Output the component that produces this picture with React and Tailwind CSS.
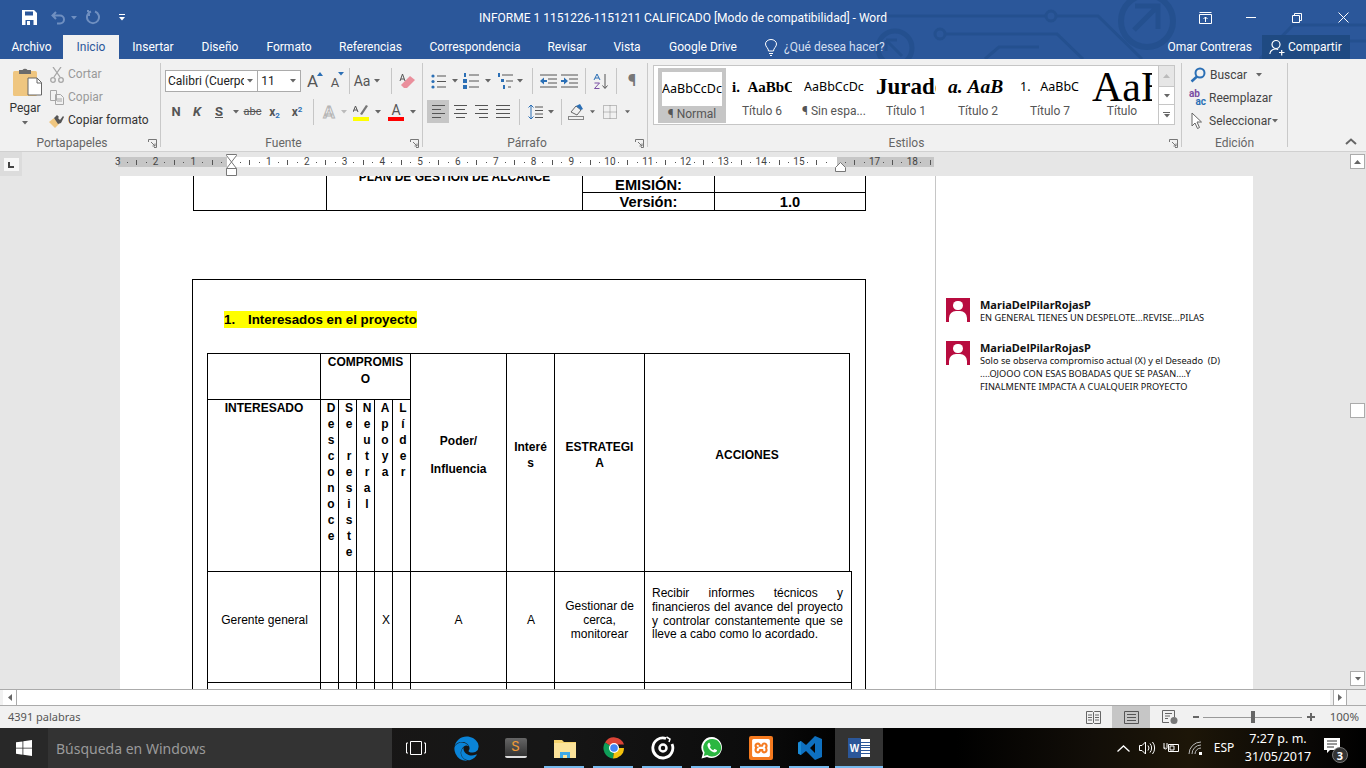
import React from "react";
import { FaEdge } from "react-icons/fa";
import { SiXampp } from "react-icons/si";

const Caret = ({ c = "#666" }) => (
  <svg width="6" height="4" viewBox="0 0 6 4"><path d="M0 0h6L3 3.5z" fill={c} /></svg>
);
const C = ({ w, children, cls = "" }) => (
  <div className={`flex items-center justify-center shrink-0 h-full ${w} ${cls}`}>{children}</div>
);
const Sep = () => <div className="w-px h-[26px] bg-[#c6c6c6] shrink-0 self-center" />;
const Launcher = () => (
  <svg width="9" height="9" viewBox="0 0 9 9" fill="none" stroke="#777"><path d="M.5 3V.5h8v8H6M3 3l4 4M7 4.5V7H4.5" /></svg>
);
const Group = ({ w, label, children }) => (
  <div className={`relative h-[84px] border-r border-[#c9c9c9] shrink-0 ${w}`}>
    <div className="h-[73px] flow-root">{children}</div>
    <div className={`h-[14px] leading-[14px] text-center text-[12px] text-[#666] ${label === "Edición" ? "" : "pr-[16px]"}`}>{label}</div>
    <div className="absolute right-[3px] bottom-[-1px]">{label !== "Edición" && <Launcher />}</div>
  </div>
);

const Lines = ({ rows, stroke = "#555" }) => (
  <svg width="17" height="15" viewBox="0 0 17 15" stroke={stroke} fill="none">
    {rows.map(([a, b], i) => <path key={i} d={`M${a} ${1.5 + i * 4}H${b}`} />)}
  </svg>
);
const Bullets = () => (
  <svg width="16" height="15" viewBox="0 0 16 15"><g fill="#2b6fb5"><circle cx="2" cy="2" r="1.6" /><circle cx="2" cy="7.5" r="1.6" /><circle cx="2" cy="13" r="1.6" /></g><path d="M6 2h9M6 7.5h9M6 13h9" stroke="#555" /></svg>
);
const Numbers = () => (
  <svg width="16" height="16" viewBox="0 0 16 16"><g fill="#2b6fb5"><rect x="1" y="0" width="2" height="4" /><rect x="0" y="6" width="4" height="4" /><rect x="0" y="12" width="4" height="4" /></g><path d="M6 2h10M6 8h10M6 14h10" stroke="#555" /></svg>
);
const Multi = () => (
  <svg width="16" height="16" viewBox="0 0 16 16"><g fill="#2b6fb5"><rect x="0" y="0" width="2" height="4" /><rect x="3" y="6" width="3" height="3" /><rect x="5" y="12" width="2" height="4" /></g><path d="M4 2h11M8 8h7M10 14h3" stroke="#555" /></svg>
);
const Indent = ({ dir }) => (
  <svg width="17" height="14" viewBox="0 0 17 14"><path d="M0 1h17M8 5h9M8 9h9M0 13h17" stroke="#555" /><path d={dir < 0 ? "M0 7l4-3.5V6h3v2H4v2.5z" : "M7 7L3 3.5V6H0v2h3v2.5z"} fill="#2b6fb5" /></svg>
);

function Ribbon() {
  return (
    <div className="relative flex h-[93px] bg-[#f1f1f1] border-b border-[#d0d0d0] pt-[4px] shrink-0">
      <Group w="w-[161px]" label="Portapapeles">
        <div className="flex">
          <div className="w-[50px] flex flex-col items-center">
            <svg className="mt-[3px] ml-[5px]" width="30" height="31" viewBox="0 0 30 31">
              <rect x="0" y="5" width="24" height="25" rx="1.5" fill="#efc680" />
              <path d="M6 4h3.5a3 3 0 0 1 5 0H18v4H6z" fill="#6b6b6b" />
              <path d="M15 12h9l4.500 4.500V29H15z" fill="#fff" stroke="#666" />
              <path d="M24 12v5h4.500" fill="none" stroke="#666" />
            </svg>
            <div className="text-[12px] leading-[16px] text-[#333] mt-[3px]">Pegar</div>
            <div className="mt-[5px]"><Caret /></div>
          </div>
          <div className="flex flex-col text-[12px] leading-[23px]">
            <div className="flex items-center h-[23px] text-[#999]">
              <svg className="mr-[4px]" width="14" height="16" viewBox="0 0 14 16" fill="none" stroke="#a6a6a6" strokeWidth="1.300"><path d="M3 0l7 10M11 0L4 10" /><circle cx="3" cy="13" r="2.300" /><circle cx="11" cy="13" r="2.300" /></svg>
              Cortar
            </div>
            <div className="flex items-center h-[23px] text-[#999]">
              <svg className="mr-[4px]" width="14" height="15" viewBox="0 0 14 15" fill="#f1f1f1" stroke="#a6a6a6"><path d="M.5.500h6v10h-6zM5.500 4.500h5l3 3v7h-8z" /><path d="M7 9h5M7 11h5" /></svg>
              Copiar
            </div>
            <div className="flex items-center h-[23px] text-[#333] ml-[-1px]">
              <svg className="mr-[3px]" width="16" height="15" viewBox="0 0 16 15"><path d="M0 9l5-4 5 6-4 4z" fill="#efc680" /><path d="M5 5l3-3 2 2-1 1 2 2 3-4 1 1-3 6-3 1z" fill="#555" /></svg>
              Copiar formato
            </div>
          </div>
        </div>
      </Group>

      <Group w="w-[262px]" label="Fuente">
        <div className="flex h-[22px] mt-[7px] ml-[4px] text-[#444]">
          <div className="w-[94px] h-full bg-white border border-[#ababab] flex items-center pl-[2px] text-[12px] text-[#222]">
            <span className="w-[76px] overflow-hidden whitespace-nowrap">Calibri (Cuerpo</span><span className="ml-[3px]"><Caret /></span>
          </div>
          <div className="w-[43px] h-full bg-white border border-l-0 border-[#ababab] flex items-center justify-between pl-[3px] pr-[4px] text-[12px] text-[#222]">11<Caret /></div>
          <C w="w-[23px]"><span className="relative text-[17px] leading-none text-[#555]">A<span className="absolute top-[-1px] right-[-5px]"><svg width="6" height="4" viewBox="0 0 6 4"><path d="M0 4h6L3 0z" fill="#2b6fb5" /></svg></span></span></C>
          <C w="w-[22px]"><span className="relative text-[13px] leading-none text-[#555] mt-[3px]">A<span className="absolute top-[-4px] right-[-5px]"><Caret c="#2b6fb5" /></span></span></C>
          <C w="w-[3px]" />
          <Sep />
          <C w="w-[34px]"><span className="text-[14px] text-[#555] mr-[4px]">Aa</span><Caret /></C>
          <C w="w-[7px]" />
          <Sep />
          <C w="w-[30px]">
            <svg width="17" height="16" viewBox="0 0 17 16"><path d="M5 15l-3-3 9-9 5 4-8 8z" fill="#ea8f9c" /><path d="M1 8L3.500 1 6 8M2 6h3" stroke="#555" fill="none" /></svg>
          </C>
        </div>
        <div className="flex h-[22px] mt-[9px] ml-[4px] font-bold text-[#555]">
          <C w="w-[22px]" cls="text-[13px]">N</C>
          <C w="w-[20px]" cls="text-[13px] italic">K</C>
          <C w="w-[24px]" cls="text-[13px] underline">S</C>
          <C w="w-[10px]"><Caret /></C>
          <C w="w-[23px]" cls="text-[11px] font-normal line-through">abc</C>
          <C w="w-[21px]" cls="text-[12px]"><span>x<sub className="text-[8px] text-[#2b6fb5] bottom-[-2px]">2</sub></span></C>
          <C w="w-[24px]" cls="text-[12px]"><span>x<sup className="text-[8px] text-[#2b6fb5] top-[-4px]">2</sup></span></C>
          <C w="w-[4px]" />
          <Sep />
          <C w="w-[3px]" />
          <C w="w-[24px]"><span className="text-[17px] leading-none text-[#f1f1f1] [-webkit-text-stroke:1px_#b5b5b5]">A</span></C>
          <C w="w-[6px]"><Caret c="#bbb" /></C>
          <C w="w-[27px]">
            <div className="flex flex-col items-center w-[16px]">
              <svg width="16" height="13" viewBox="0 0 16 13"><path d="M9 11l6-9-2-1-6 9z" fill="#777" /><path d="M0 8l2.500-6L5 8M1 6h3" stroke="#555" fill="none" /></svg>
              <div className="w-[16px] h-[4px] bg-[#ffff00]" />
            </div>
          </C>
          <C w="w-[8px]"><Caret /></C>
          <C w="w-[28px]">
            <div className="flex flex-col items-center w-[16px] text-[14px] leading-[13px] font-normal text-[#555]">
              A
              <div className="w-[16px] h-[4px] bg-[#ff0000]" />
            </div>
          </C>
          <C w="w-[6px]"><Caret /></C>
        </div>
      </Group>

      <Group w="w-[225px]" label="Párrafo">
        <div className="flex h-[22px] mt-[7px] ml-[8px]">
          <C w="w-[16px]"><Bullets /></C>
          <C w="w-[16px]"><Caret /></C>
          <C w="w-[16px]"><Numbers /></C>
          <C w="w-[17px]"><Caret /></C>
          <C w="w-[20px]"><Multi /></C>
          <C w="w-[8px]"><Caret /></C>
          <C w="w-[8px]" />
          <Sep />
          <C w="w-[4px]" />
          <C w="w-[22px]"><Indent dir={-1} /></C>
          <C w="w-[20px]"><Indent dir={1} /></C>
          <C w="w-[6px]" />
          <Sep />
          <C w="w-[30px]">
            <svg width="16" height="17" viewBox="0 0 16 17"><path d="M12 1v14M9.500 12.500L12 15.500l2.500-3" stroke="#555" fill="none" /><path d="M1 7l3-6 3 6M2 5h4" stroke="#2b6fb5" fill="none" /><path d="M1.500 10h5L1.500 15.500h5" stroke="#7a4fa3" fill="none" /></svg>
          </C>
          <Sep />
          <C w="w-[30px]" cls="text-[17px] font-bold text-[#777]">¶</C>
        </div>
        <div className="flex h-[23px] mt-[8px] ml-[4px]">
          <C w="w-[22px]" cls="bg-[#c6c6c6]"><Lines rows={[[2, 15], [2, 11], [2, 15], [2, 11]]} /></C>
          <C w="w-[22px]"><Lines rows={[[2, 15], [4, 13], [2, 15], [4, 13]]} /></C>
          <C w="w-[21px]"><Lines rows={[[2, 15], [6, 15], [2, 15], [6, 15]]} /></C>
          <C w="w-[23px]"><Lines rows={[[1, 15], [1, 15], [1, 15], [1, 15]]} /></C>
          <C w="w-[4px]" />
          <Sep />
          <C w="w-[2px]" />
          <C w="w-[26px]">
            <svg width="15" height="16" viewBox="0 0 15 16"><path d="M3 1v14M.5 3.500L3 1l2.500 2.500M.5 12.500L3 15l2.500-2.500" stroke="#2b6fb5" fill="none" /><path d="M7 3h8M7 6.500h8M7 10h8M7 13.500h8" stroke="#555" /></svg>
          </C>
          <C w="w-[6px]"><Caret /></C>
          <C w="w-[7px]" />
          <Sep />
          <C w="w-[28px]">
            <svg width="17" height="17" viewBox="0 0 17 17"><path d="M3 9l5-6 5 4-4 5z" fill="none" stroke="#666" /><path d="M8 3l5 4 2-1-3-5z" fill="#2b6fb5" /><rect x=".5" y="13.500" width="15" height="3" fill="#f1f1f1" stroke="#888" /></svg>
          </C>
          <C w="w-[5px]"><Caret /></C>
          <C w="w-[30px]">
            <svg width="14" height="14" viewBox="0 0 14 14" fill="none" stroke="#888" strokeDasharray="1 1"><path d="M.5.500h13v13H.5zM7 .500v13M.5 7h13" /></svg>
          </C>
          <C w="w-[5px]"><Caret /></C>
        </div>
      </Group>

      <Group w="w-[534px]" label="Estilos">
        <div className="flex w-[522px] h-[60px] mt-[2px] ml-[5px] bg-white border border-[#c6c6c6] overflow-hidden">
          <div className="flex w-[504px] shrink-0">
            <div className="w-[72px] pl-[4px] pt-[2px] shrink-0">
              <div className="w-[68px] h-[55px] bg-[#c6c6c6] p-[4px] pb-0 flex flex-col items-center">
                <div className="w-[60px] h-[34px] bg-white flex items-center justify-center overflow-hidden whitespace-nowrap text-[12.500px] text-black font-['Noto_Sans']">AaBbCcDc</div>
                <div className="text-[12px] leading-[16px] text-[#555]">¶ Normal</div>
              </div>
            </div>
            <StyleItem label="Título 6" cls="font-['Liberation_Serif'] font-bold text-[15px]">i.&nbsp;&nbsp;AaBbC</StyleItem>
            <StyleItem label="¶ Sin espa..." cls="font-['Noto_Sans'] text-[12.500px]">AaBbCcDc</StyleItem>
            <StyleItem label="Título 1" cls="font-['Liberation_Serif'] font-bold text-[23px]">Jurado</StyleItem>
            <StyleItem label="Título 2" cls="font-['Liberation_Serif'] font-bold italic text-[19.500px]">a.&nbsp;AaB</StyleItem>
            <StyleItem label="Título 7" cls="font-['Noto_Sans'] text-[12.500px]">1.&nbsp;&nbsp;&nbsp;AaBbC</StyleItem>
            <StyleItem label="Título" cls="font-['Liberation_Serif'] text-[42px]">AaB</StyleItem>
          </div>
          <div className="w-[16px] shrink-0 flex flex-col border-l border-[#c6c6c6]">
            <div className="h-[20px] bg-[#e6e6e6] flex items-center justify-center"><svg width="7" height="4" viewBox="0 0 7 4"><path d="M0 4h7L3.500 0z" fill="#bbb" /></svg></div>
            <div className="h-[19px] border-y border-[#c6c6c6] flex items-center justify-center"><Caret /></div>
            <div className="flex-1 flex flex-col items-center justify-center gap-[1px]"><div className="w-[7px] h-px bg-[#666]" /><Caret /></div>
          </div>
        </div>
      </Group>

      <Group w="w-[106px]" label="Edición">
        <div className="flex flex-col text-[12px] text-[#444] pl-[8px]">
          <div className="flex items-center h-[23px]">
            <svg width="16" height="16" viewBox="0 0 16 16" fill="none" className="mr-[4px]"><circle cx="10" cy="6" r="4.500" stroke="#2b6fb5" strokeWidth="2" /><path d="M7 9.500L1.500 14.500" stroke="#2b6fb5" strokeWidth="2.500" /></svg>
            Buscar<span className="ml-[9px]"><Caret /></span>
          </div>
          <div className="flex items-center h-[23px]">
            <span className="w-[17px] mr-[3px] text-[10px] leading-[8px] font-bold flex flex-col ml-[-1px]"><span className="text-[#7a4fa3]">ab</span><span className="text-[#2b6fb5] text-right">ac</span></span>
            Reemplazar
          </div>
          <div className="flex items-center h-[23px]">
            <svg width="12" height="18" viewBox="0 0 12 18" fill="#fff" stroke="#666" className="ml-[1px] mr-[6px]"><path d="M1 1v13l3-3 2.500 5.500 2-1L6 10h4.500z" /></svg>
            Seleccionar<span className="ml-[1px]"><Caret /></span>
          </div>
        </div>
      </Group>

      <div className="flex-1 flex items-end justify-end pr-[9px] pb-[6px]">
        <svg width="12" height="7" viewBox="0 0 12 7" fill="none" stroke="#666" strokeWidth="2"><path d="M1 6l5-4.500L11 6" /></svg>
      </div>
    </div>
  );
}

const StyleItem = ({ label, cls, children }) => (
  <div className="w-[72px] shrink-0 flex flex-col items-center pt-[2px]">
    <div className={`w-[60px] h-[34px] mt-[2px] overflow-hidden whitespace-nowrap text-black flex items-center justify-start ${cls}`}>
      <span className="shrink-0">{children}</span>
    </div>
    <div className="text-[12px] leading-[15px] text-[#555] whitespace-nowrap">{label}</div>
  </div>
);

const rulerNums = [3, 2, 1, "", 1, 2, 3, 4, 5, 6, 7, 8, 9, 10, 11, 12, 13, 14, 15, "", 17, 18];

function Ruler() {
  return (
    <div className="relative h-[24px] bg-[#e6e6e6] flex shrink-0">
      <div className="w-[22px] h-full bg-[#dcdcdc] flex items-start justify-center pt-[6px] shrink-0">
        <div className="w-[15px] h-[13px] bg-[#f7f7f7] flex items-center justify-center">
          <div className="w-[6px] h-[6px] border-l-2 border-b-2 border-[#444]" />
        </div>
      </div>
      <div className="relative ml-[96px] mt-[5px] flex h-[10px] w-[816px] text-[10px] text-[#444]">
        <div className="w-[109px] bg-[#c6c6c6]" />
        <div className="w-[610px] bg-white" />
        <div className="w-[97px] bg-[#c6c6c6]" />
        <div className="absolute left-[-5px] top-0 h-full w-[821px] overflow-hidden flex">
          {rulerNums.map((n, i) => (
            <div key={i} className="w-[37.800px] shrink-0 flex items-center">
              <div className="w-[9.450px] text-center leading-[10px] shrink-0">{n}</div>
              <div className="w-[9.450px] flex justify-center shrink-0"><div className="w-px h-px bg-[#555]" /></div>
              <div className="w-[9.450px] flex justify-center shrink-0"><div className="w-px h-[5px] bg-[#555]" /></div>
              <div className="w-[9.450px] flex justify-center shrink-0"><div className="w-px h-px bg-[#555]" /></div>
            </div>
          ))}
        </div>
      </div>
      <svg className="absolute left-[226px] top-[2px]" width="11" height="22" viewBox="0 0 11 22" fill="#fff" stroke="#777">
        <path d="M.5.500h10v1L5.500 8 .5 1.500z" />
        <path d="M5.500 8l5 6.500H.5z" />
        <path d="M.5 14.500h10v7H.5z" />
      </svg>
      <svg className="absolute left-[835px] top-[10px]" width="11" height="10" viewBox="0 0 11 10" fill="#fff" stroke="#777">
        <path d="M.5 5.500l5-5 5 5v4H.5z" />
      </svg>
    </div>
  );
}

const Cell = ({ cls = "", children }) => (
  <div className={`border-l border-t border-black text-center ${cls}`}>{children}</div>
);
const VText = ({ text }) => (
  <div className="text-center leading-[16px] font-bold pl-[3px]">
    {[...text].map((ch, i) => <div key={i} className="h-[16px]">{ch === " " ? "\u00a0" : ch}</div>)}
  </div>
);

function Doc() {
  return (
    <div className="relative flex-1 bg-[#e6e6e6] overflow-hidden pl-[120px]">
      <div className="w-[1133px] h-[1000px] bg-white flex">
        <div className="w-[816px] border-r border-[#c6c6c6] pl-[72px] font-['Liberation_Sans'] text-black text-[12px] shrink-0">
          <div className="ml-px mt-[-31px] w-[673px] grid grid-cols-[134px_256px_132px_151px] border-b border-black">
            <div className="border-x border-black h-[65px]" />
            <div className="border-r border-black text-center font-bold leading-[14px] pt-[25px]">PLAN DE GESTIÓN DE ALCANCE</div>
            <div className="flex flex-col">
              <div className="h-[47px] flex items-end justify-center font-bold text-[14.670px] leading-[13px] border-r border-black">EMISIÓN:</div>
              <div className="h-[18px] flex items-center justify-center font-bold text-[14.670px] border-r border-t border-black pt-[1px]">Versión:</div>
            </div>
            <div className="flex flex-col">
              <div className="h-[47px] border-r border-black" />
              <div className="h-[18px] flex items-center justify-center font-bold text-[14.670px] border-r border-t border-black pt-[1px]">1.0</div>
            </div>
          </div>
          <div className="mt-[68px] w-[674px] h-[600px] border border-black pt-[31px]">
            <div className="ml-[31px] h-[17px] w-[193px] bg-[#ffff00] flex items-center font-bold text-[13.330px] whitespace-nowrap">
              <span className="w-[24px]">1.</span>Interesados en el proyecto
            </div>
            <div className="ml-[14px] mt-[25px]">
              <div className="w-[643px] grid grid-cols-[113px_18px_18px_18px_18px_18px_96px_48px_90px_205px] grid-rows-[46px_172px] border-r border-black font-bold">
                <Cell />
                <Cell cls="col-span-5 break-all leading-[16.500px] px-[4px]">COMPROMISO</Cell>
                <Cell cls="row-span-2 flex flex-col items-center justify-center pb-[15px]"><span>Poder/</span><span className="mt-[10px]">Influencia</span></Cell>
                <Cell cls="row-span-2 flex items-center justify-center pb-[16px] break-all leading-[16px] px-[6px]"><span>Interés</span></Cell>
                <Cell cls="row-span-2 flex items-center justify-center pb-[16px] break-all leading-[16px] px-[9px]"><span>ESTRATEGIA</span></Cell>
                <Cell cls="row-span-2 flex items-center justify-center pb-[16px]">ACCIONES</Cell>
                <Cell cls="pt-[1px] leading-[14px]">INTERESADO</Cell>
                <Cell><VText text="Desconoce" /></Cell>
                <Cell><VText text="Se resiste" /></Cell>
                <Cell><VText text="Neutral" /></Cell>
                <Cell><VText text="Apoya" /></Cell>
                <Cell><VText text="Líder" /></Cell>
              </div>
              <div className="w-[645px] h-[111px] grid grid-cols-[113px_18px_18px_18px_18px_18px_96px_48px_90px_207px] border-r border-black">
                <Cell cls="flex items-center justify-center pb-[14px] pl-[1px]">Gerente general</Cell>
                <Cell /><Cell /><Cell />
                <Cell cls="flex items-center justify-center pb-[14px] pl-[5px]">X</Cell>
                <Cell />
                <Cell cls="flex items-center justify-center pb-[14px]">A</Cell>
                <Cell cls="flex items-center justify-center pb-[14px] pl-[1px]">A</Cell>
                <Cell cls="flex items-center justify-center leading-[14px] px-[8px] pb-[14px]">Gestionar de cerca, monitorear</Cell>
                <Cell cls="pl-[7px] pr-[8px] pt-[15px] leading-[13.800px] text-justify">Recibir informes técnicos y financieros del avance del proyecto y controlar constantemente que se lleve a cabo como lo acordado.</Cell>
              </div>
              <div className="w-[645px] h-[60px] grid grid-cols-[113px_18px_18px_18px_18px_18px_96px_48px_90px_207px] border-r border-black">
                <Cell /><Cell /><Cell /><Cell /><Cell /><Cell /><Cell /><Cell /><Cell /><Cell />
              </div>
            </div>
          </div>
        </div>
        <div className="flex-1 pl-[10px] pt-[122px] font-['Noto_Sans'] text-[#111]">
          <Comment>EN GENERAL TIENES UN DESPELOTE...REVISE...PILAS</Comment>
          <div className="h-[17px]" />
          <Comment>
            Solo se observa compromiso actual (X) y el Deseado  (D){"\n"}....OJOOO CON ESAS BOBADAS QUE SE PASAN....Y{"\n"}FINALMENTE IMPACTA A CUALQUEIR PROYECTO
          </Comment>
        </div>
      </div>
    </div>
  );
}

const Comment = ({ children }) => (
  <div className="flex">
    <div className="w-[24px] h-[24px] bg-[#b80c3f] overflow-hidden shrink-0 flex flex-col items-center">
      <div className="w-[10px] h-[10px] rounded-full bg-white mt-[3px]" />
      <div className="w-[18px] h-[12px] rounded-t-[7px] bg-white mt-[1px]" />
    </div>
    <div className="ml-[10px]">
      <div className="text-[11px] leading-[13px] font-bold">MariaDelPilarRojasP</div>
      <div className="text-[9.200px] leading-[13px] whitespace-pre">{children}</div>
    </div>
  </div>
);

function TitleBar() {
  const lines = "#24508f";
  return (
    <div className="relative h-[59px] bg-[#2b579a] text-white shrink-0 overflow-hidden">
      <svg className="absolute left-0 top-0 pointer-events-none" width="1366" height="59" viewBox="0 0 1366 59" fill="none" stroke={lines} strokeWidth="3">
        <circle cx="895" cy="48" r="17" strokeWidth="5" />
        <path d="M886 40h11M886 40v11M886 40l16 16" />
        <circle cx="1147" cy="21" r="26" strokeWidth="6" />
        <path d="M1135 6h23v23M1158 6l-24 24" strokeWidth="5" />
        <path d="M880 16h166" />
        <circle cx="1051" cy="16" r="5" />
        <path d="M1056 16h42l44 43" />
        <circle cx="940" cy="34" r="5" />
        <path d="M945 34h112l26 25" />
        <path d="M985 59l14-12h40M1260 59l33-34h73M1290 59l18-18h58" />
      </svg>
      <div className="relative grid grid-cols-[1fr_auto_1fr] h-[35px]">
        <div className="flex items-center">
          <svg className="ml-[22px]" width="15" height="15" viewBox="0 0 15 15"><path d="M0 0h12l3 3v12H0z" fill="#fff" /><path d="M3 1.500h8v4H3z" fill="#2b579a" /><path d="M3.500 10h8v5h-8z" fill="#2b579a" /><path d="M5 11h3v4H5z" fill="#fff" /></svg>
          <svg className="ml-[14px]" width="15" height="14" viewBox="0 0 15 14" fill="none" stroke="#6f8fc0" strokeWidth="2"><path d="M5 1L1.500 4.500 5 8M2 4.500h7a4 4 0 0 1 0 8H6" /></svg>
          <span className="ml-[5px]"><Caret c="#6f8fc0" /></span>
          <svg className="ml-[9px]" width="15" height="15" viewBox="0 0 15 15" fill="none" stroke="#6f8fc0" strokeWidth="2"><path d="M5 1.500a6 6 0 1 0 4 0M3 1v5M3 1H1" /></svg>
          <span className="ml-[18px] flex flex-col items-center gap-[2px]"><span className="w-[6px] h-px bg-white" /><Caret c="#fff" /></span>
        </div>
        <div className="flex items-center text-[12px] whitespace-nowrap">INFORME 1 1151226-1151211 CALIFICADO [Modo de compatibilidad] - Word</div>
        <div className="flex items-center justify-end">
          <C w="w-[46px]"><svg width="13" height="12" viewBox="0 0 13 12" fill="none" stroke="#fff"><path d="M.5 2.500h12v9H.5zM.5.500h12M6.500 10V5M4.500 7l2-2 2 2" /></svg></C>
          <C w="w-[46px]"><div className="w-[10px] h-px bg-white" /></C>
          <C w="w-[46px]"><svg width="10" height="10" viewBox="0 0 10 10" fill="none" stroke="#fff"><path d="M.5 2.500h7v7h-7zM2.500 2.500v-2h7v7h-2" /></svg></C>
          <C w="w-[46px]"><svg width="11" height="11" viewBox="0 0 11 11" stroke="#fff"><path d="M.5.500l10 10M10.500.500l-10 10" /></svg></C>
        </div>
      </div>
      <div className="relative flex h-[24px] text-[12px] items-stretch">
        <C w="w-[63px]">Archivo</C>
        <C w="w-[56px]" cls="bg-[#f1f1f1] text-[#2b579a]">Inicio</C>
        <C w="w-[68px]">Insertar</C>
        <C w="w-[66px]">Diseño</C>
        <C w="w-[72px]">Formato</C>
        <C w="w-[91px]">Referencias</C>
        <C w="w-[118px]">Correspondencia</C>
        <C w="w-[66px]">Revisar</C>
        <C w="w-[54px]">Vista</C>
        <C w="w-[98px]">Google Drive</C>
        <div className="flex items-center ml-[13px] text-[#d3dff0]">
          <svg width="12" height="17" viewBox="0 0 12 17" fill="none" stroke="#fff"><path d="M3.500 12c0-3-3-4-3-7a5.500 4.500 0 0 1 11 0c0 3-3 4-3 7zM4 14.500h4M5 16.500h2" /></svg>
          <span className="ml-[7px]">¿Qué desea hacer?</span>
        </div>
        <div className="flex-1" />
        <div className="flex items-center mr-[10px]">Omar Contreras</div>
        <div className="flex items-center w-[88px] mr-[16px] bg-[#1f4a82] pl-[7px]">
          <svg width="16" height="17" viewBox="0 0 16 17" fill="none" stroke="#fff" strokeWidth="1.200"><circle cx="7" cy="5.500" r="4" /><path d="M.8 15c.5-3 3-5 6.200-5 1 0 1.500.2 2.200.4M10 13.500h5.500M12.700 11v5.500" /></svg>
          <span className="ml-[3px]">Compartir</span>
        </div>
      </div>
    </div>
  );
}

function HScroll() {
  return (
    <div className="h-[17px] bg-[#f1f1f1] border-y border-[#ababab] flex shrink-0 px-[3px]">
      <div className="w-[14px] bg-white border-r border-[#ababab] flex items-center justify-center">
        <svg width="4" height="7" viewBox="0 0 4 7"><path d="M4 0v7L0 3.500z" fill="#666" /></svg>
      </div>
      <div className="w-[1313px] bg-white" />
      <div className="ml-[3px] w-[14px] bg-white border-x border-[#ababab] flex items-center justify-center">
        <svg width="4" height="7" viewBox="0 0 4 7"><path d="M0 0v7l4-3.500z" fill="#666" /></svg>
      </div>
    </div>
  );
}

function StatusBar() {
  return (
    <div className="h-[22px] bg-[#f1f1f1] flex items-center text-[11px] text-[#555] shrink-0 font-['Noto_Sans']">
      <span className="ml-[8px]">4391 palabras</span>
      <div className="flex-1" />
      <C w="w-[38px]"><svg width="15" height="13" viewBox="0 0 15 13" fill="#f1f1f1" stroke="#666"><path d="M.5.500h6l1 1 1-1h6v12h-6l-1-1-1 1h-6zM7.500 1.500v10M2 4h4M2 6.500h4M2 9h4M9 4h4M9 6.500h4M9 9h4" /></svg></C>
      <C w="w-[38px]" cls="bg-[#c6c6c6]"><svg width="15" height="13" viewBox="0 0 15 13" fill="none" stroke="#555"><path d="M.5.500h14v12H.5zM3 3.500h9M3 6.500h9M3 9.500h9" /></svg></C>
      <C w="w-[40px]"><svg width="16" height="14" viewBox="0 0 16 14" fill="none" stroke="#666"><path d="M.5.500h12V7M.5.500V12.500H7M3 3.500h7M3 6h5M3 8.500h3" /><circle cx="12" cy="10.500" r="3.500" fill="#777" stroke="none" /></svg></C>
      <div className="w-[6px] h-[2px] bg-[#666] ml-[3px] mr-[4px]" />
      <div className="relative w-[99px] h-px bg-[#999]">
        <div className="absolute left-[48px] top-[-6px] w-[4px] h-[12px] bg-[#666]" />
      </div>
      <svg className="ml-[5px]" width="8" height="8" viewBox="0 0 8 8"><path d="M0 4h8M4 0v8" stroke="#666" strokeWidth="2" /></svg>
      <span className="w-[43px] text-right pr-[7px] ml-[8px] text-[11.500px]">100%</span>
    </div>
  );
}

const TaskIcon = ({ children, cls = "", bar = true, w = "w-[49px]" }) => (
  <div className={`relative h-full flex items-center justify-center shrink-0 ${w} ${cls}`}>
    {children}
    {bar && <div className="absolute bottom-0 left-[4px] right-[5px] h-[2px] bg-[#76b9ed]" />}
  </div>
);

function Taskbar() {
  return (
    <div className="h-[40px] flex text-white shrink-0 font-['Noto_Sans'] bg-[linear-gradient(90deg,#1b1715_0%,#161616_40%,#0c0c0c_55%,#000_62%,#000_70%,#120e08_80%,#1d1608_87%,#090705_96%,#000_100%)]">
      <div className="w-[48px] bg-[#282828] flex items-center justify-center shrink-0">
        <svg width="16" height="16" viewBox="0 0 16 16" fill="#fff"><path d="M0 2.300l6.500-.9v6.300H0zM7.300 1.300L16 0v7.700H7.300zM0 8.400h6.500v6.300L0 13.800zM7.300 8.400H16V16l-8.700-1.200z" /></svg>
      </div>
      <div className="w-[344px] bg-[#333333] flex items-center pl-[8px] text-[14px] text-[#9a9a9a] shrink-0">Búsqueda en Windows</div>
      <TaskIcon bar={false} w="w-[48px]" cls="pr-[1px]">
        <svg width="20" height="14" viewBox="0 0 20 14" fill="none" stroke="#fff"><path d="M4.500.500h11v13h-11zM2 2H.5v10H2M18 2h1.500v10H18" /></svg>
      </TaskIcon>
      <TaskIcon bar={false} cls="ml-[2px]"><FaEdge size={25} color="#0a84d8" /></TaskIcon>
      <TaskIcon bar={false}>
        <div className="w-[22px] h-[20px] rounded-[2px] bg-[linear-gradient(#666,#333)] border-b-2 border-[#ddd] flex items-center justify-center text-[#f09a37] font-['Liberation_Mono'] text-[14px]">S</div>
      </TaskIcon>
      <TaskIcon>
        <svg width="22" height="20" viewBox="0 0 22 20"><path d="M0 2h8l2 2h12v16H0z" fill="#f5d36e" /><path d="M0 5h22v15H0z" fill="#fbe39a" /><path d="M6 14h10v6h-3v-3H9v3H6z" fill="#3fa9e8" /></svg>
      </TaskIcon>
      <TaskIcon>
        <svg width="22" height="22" viewBox="0 0 22 22">
          <path d="M11 11L2 5.500A10.500 10.500 0 0 1 21 7.500H11z" fill="#db4437" />
          <path d="M11 11h10a10.500 10.500 0 0 1-11 10.500z" fill="#f4c20d" />
          <path d="M11 11l-1 10.500A10.500 10.500 0 0 1 2 5.500z" fill="#0f9d58" />
          <circle cx="11" cy="11" r="5" fill="#fff" /><circle cx="11" cy="11" r="3.800" fill="#4285f4" />
        </svg>
      </TaskIcon>
      <TaskIcon>
        <svg width="24" height="24" viewBox="0 0 24 24" fill="none" stroke="#fff"><path d="M15 2.500A10 10 0 1 0 21 8" strokeWidth="2.800" /><path d="M15.500 1l3.500 2-1 3" strokeWidth="1.500" /><circle cx="12" cy="12" r="3.500" strokeWidth="2.500" /></svg>
      </TaskIcon>
      <TaskIcon>
        <svg width="22" height="22" viewBox="0 0 22 22"><path d="M11 0a10.500 10.500 0 0 0-9 16L.5 21.500 6 20a10.500 10.500 0 1 0 5-20z" fill="#fff" /><path d="M11 2a8.800 8.800 0 0 0-7.400 13.500L2.800 19l3.500-1A8.800 8.800 0 1 0 11 2z" fill="#2bb741" /><path d="M7.500 6c-1 .8-1.300 2-.8 3.500 1 2.700 3 4.800 5.800 5.800 1.500.4 2.800 0 3.500-1.200.2-.4 0-.8-.3-1l-2-1c-.3-.1-.6 0-.8.3l-.6.800c-1.500-.6-2.800-1.900-3.500-3.300l.7-.7c.2-.2.2-.5.100-.8L8.800 6.200C8.500 5.800 8 5.700 7.500 6z" fill="#fff" /></svg>
      </TaskIcon>
      <TaskIcon>
        <div className="w-[24px] h-[24px] bg-[#f57a1f] rounded-[2px] flex items-center justify-center"><SiXampp size={18} color="#fff" /></div>
      </TaskIcon>
      <TaskIcon>
        <svg width="24" height="24" viewBox="0 0 24 24"><path d="M17 0l7 3v18l-7 3-9-9-5 4-3-1.500v-11L3 5l5 4zM17 7l-5 5 5 5z" fill="#0e70c0" fillRule="evenodd" /><path d="M0 7l3-2 0 14-3-1.500z" fill="#1a8ad4" /></svg>
      </TaskIcon>
      <div className="relative w-[48px] h-full ml-[1px] bg-[#333333] flex items-center justify-center shrink-0">
        <div className="relative w-[22px] h-[20px]">
          <div className="absolute right-0 top-[1px] w-[13px] h-[18px] bg-white flex flex-col justify-around py-[2px] pl-[3px]">
            <div className="h-px bg-[#2b579a]" /><div className="h-px bg-[#2b579a]" /><div className="h-px bg-[#2b579a]" /><div className="h-px bg-[#2b579a]" /><div className="h-px bg-[#2b579a]" />
          </div>
          <div className="absolute left-0 top-0 w-[13px] h-[20px] bg-[#2b579a] text-[10px] font-bold flex items-center justify-center font-['Liberation_Sans']">W</div>
        </div>
        <div className="absolute bottom-0 left-0 right-0 h-[2px] bg-[#76b9ed]" />
      </div>
      <div className="flex-1" />
      <div className="flex items-center h-full">
        <C w="w-[24px]"><svg width="13" height="7" viewBox="0 0 13 7" fill="none" stroke="#fff" strokeWidth="1.300"><path d="M.5 6.500l6-5.500 6 5.500" /></svg></C>
        <C w="w-[24px]"><svg width="17" height="14" viewBox="0 0 17 14" fill="none" stroke="#fff"><path d="M.5 4.500h2.500L6.500 1v12L3 9.500H.5zM9 4.500a4 4 0 0 1 0 5M11 2.500a7 7 0 0 1 0 9M13.500 1a9.500 9.500 0 0 1 0 12" /></svg></C>
        <C w="w-[24px]"><svg width="16" height="12" viewBox="0 0 16 12" fill="none" stroke="#fff"><path d="M5.500 2.500h10v7h-10zM7 4h4v4H7z" /><path d="M.5 6h2M1 3v2.500a1.500 1.500 0 0 0 3 0V3M1 1v2M4 1v2" /></svg></C>
        <C w="w-[25px]"><svg width="16" height="14" viewBox="0 0 16 14" fill="none" stroke="#bbb"><path d="M1 13A12 12 0 0 1 13 1M4 13a9 9 0 0 1 9-9M7 13a6 6 0 0 1 6-6" /><rect x="11" y="11" width="3" height="3" fill="#fff" stroke="none" /></svg></C>
        <C w="w-[32px]" cls="text-[12px]">ESP</C>
        <div className="w-[76px] text-center text-[12.500px] leading-[18px]">
          <div>7:27 p. m.</div>
          <div>31/05/2017</div>
        </div>
        <div className="relative w-[32px] h-full flex items-center justify-center">
          <svg className="mb-[4px]" width="16" height="16" viewBox="0 0 16 16"><path d="M0 0h16v12H6l-3 3v-3H0z" fill="#fff" /><path d="M3 3h10M3 6h10M3 9h7" stroke="#333" /></svg>
          <div className="absolute left-[16px] top-[19px] w-[16px] h-[16px] rounded-full bg-[#333] border border-[#777] text-[11px] font-bold flex items-center justify-center leading-none">3</div>
        </div>
        <div className="w-[18px]" />
      </div>
    </div>
  );
}

export default function App() {
  return (
    <div className="w-[1366px] h-[768px] overflow-hidden flex flex-col font-['Roboto',sans-serif] bg-white">
      <TitleBar />
      <Ribbon />
      <div className="flex h-[537px] shrink-0">
        <div className="w-[1348px] flex flex-col shrink-0">
          <Ruler />
          <Doc />
        </div>
        <div className="w-[18px] bg-[#e6e6e6] flex flex-col items-end shrink-0 pr-px">
          <div className="mt-[2px] w-[15px] h-[15px] bg-white border border-[#ababab] flex items-center justify-center"><svg width="7" height="4" viewBox="0 0 7 4"><path d="M0 4h7L3.500 0z" fill="#666" /></svg></div>
          <div className="mt-[234px] w-[15px] h-[15px] bg-white border border-[#ababab]" />
          <div className="flex-1" />
          <div className="mb-[3px] w-[15px] h-[15px] bg-white border border-[#ababab] flex items-center justify-center"><Caret /></div>
        </div>
      </div>
      <HScroll />
      <StatusBar />
      <Taskbar />
    </div>
  );
}
